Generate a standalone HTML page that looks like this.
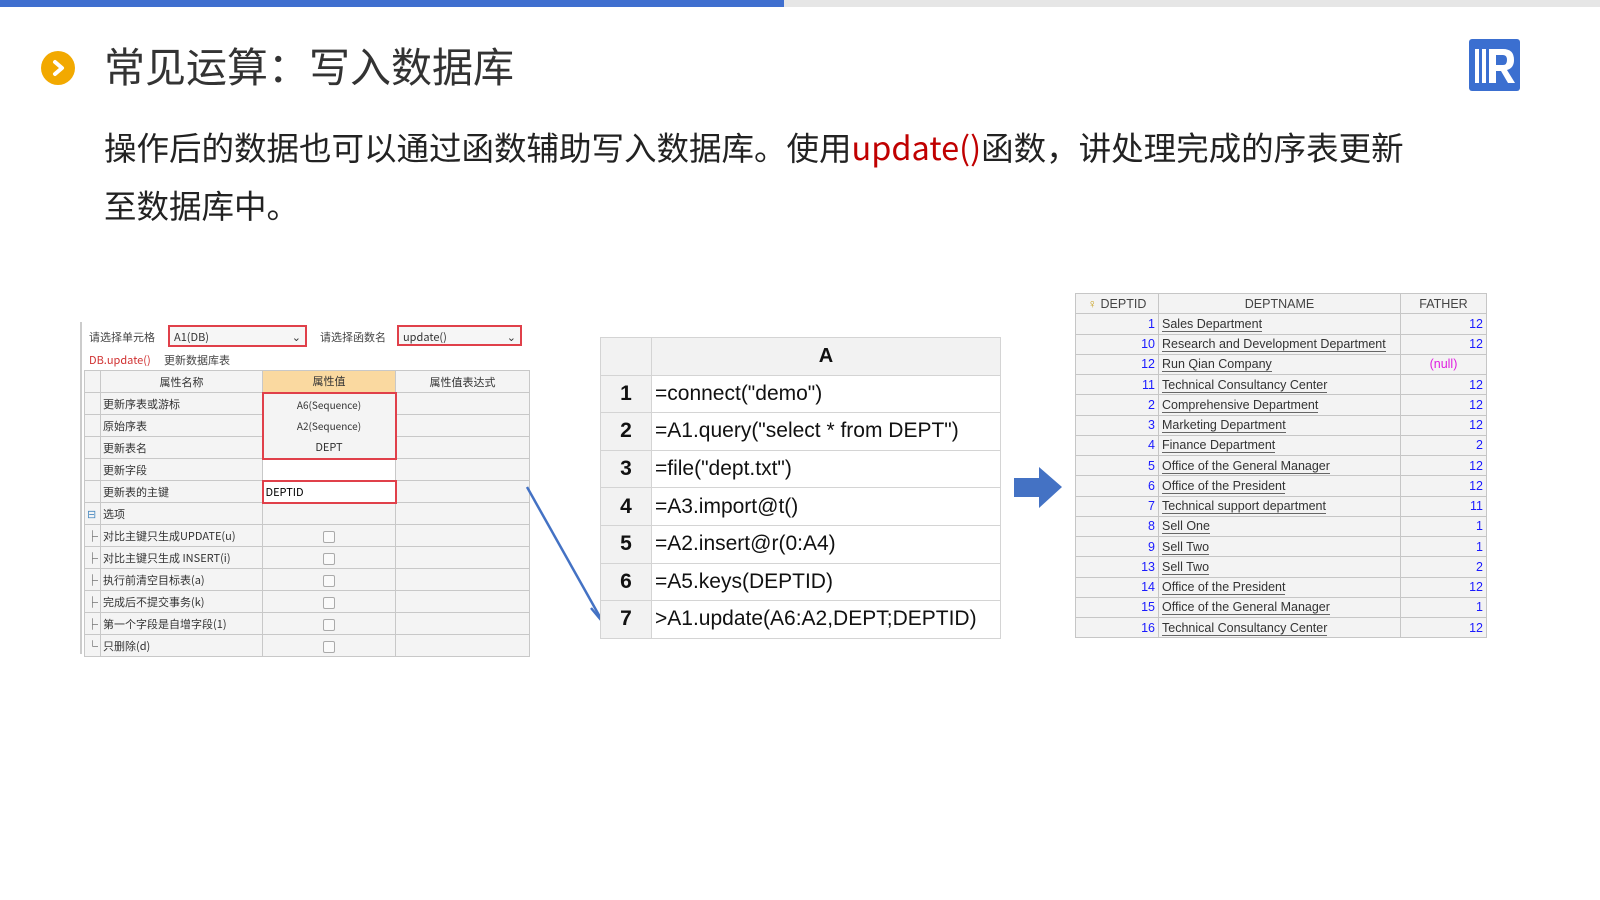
<!DOCTYPE html>
<html><head><meta charset="utf-8"><style>
*{margin:0;padding:0;box-sizing:border-box}
body{width:1600px;height:900px;background:#fff;position:relative;overflow:hidden;font-family:"Liberation Sans","Noto Sans CJK SC",sans-serif}
.abs{position:absolute}
.cjk{font-family:"Noto Sans CJK SC","Liberation Sans",sans-serif}
table{border-collapse:collapse}
#lt td{border:1px solid #c8c8c8;height:22px;font-size:11px;color:#333;padding:0 2px;white-space:nowrap}
#mt td{border:1px solid #d4d4d4;height:37.6px;font-size:21px;color:#111;padding:0 3px}
#rt td{border:1px solid #c6c6c6;height:20.25px;font-size:12.5px;padding:0 3px;background:#f3f3f3;white-space:nowrap}
#rt .n{color:#1a1aff;text-align:right}
#rt .t{color:#333}
#rt .t span{border-bottom:1px solid #666}
.cb{display:inline-block;width:12px;height:12px;border:1px solid #aaa;border-radius:2px;background:#fafafa;vertical-align:middle}
</style></head><body>
<div class="abs" style="left:0;top:0;width:784px;height:7px;background:#3f6fcf"></div>
<div class="abs" style="left:784px;top:0;width:816px;height:7px;background:#e6e6e6"></div>
<div class="abs" style="left:41px;top:51px;width:34px;height:34px;border-radius:50%;background:#f2a900"></div>
<svg class="abs" style="left:41px;top:51px" width="34" height="34"><path d="M14 11 L21 17 L14 23" stroke="#fff" stroke-width="4" fill="none" stroke-linecap="round" stroke-linejoin="round"/></svg>
<div class="abs cjk" style="left:104px;top:35px;font-size:41px;color:#333;line-height:58px">常见运算：写入数据库</div>
<svg class="abs" style="left:1469px;top:39px" width="51" height="52"><rect x="0" y="0" width="51" height="52" rx="3" fill="#3b6fd0"/><rect x="6" y="10" width="4" height="34" fill="#fff"/><rect x="13" y="10" width="4" height="34" fill="#fff"/><path d="M20 10 H34 Q45 10 45 21 Q45 29 38 31 L46 44 H39 L32 32 H27 V44 H20 Z M27 16 V26 H34 Q38 26 38 21 Q38 16 34 16 Z" fill="#fff"/></svg>
<div class="abs cjk" style="left:104px;top:118px;font-size:32.5px;color:#222;line-height:58px;width:1360px">操作后的数据也可以通过函数辅助写入数据库。使用<span style="color:#c00000">update()</span>函数，讲处理完成的序表更新<br>至数据库中。</div>

<!-- left panel -->
<div class="abs cjk" style="left:80px;top:322px;width:448px;height:332px;background:#fff;border-left:2px solid #ccc">
 <div class="abs" style="left:7px;top:7px;font-size:11px;color:#444">请选择单元格</div>
 <div class="abs" style="left:86px;top:3px;width:139px;height:22px;border:2px solid #e0404a;font-size:11px;color:#333;padding:2px 4px;background:#f6f6f6">A1(DB)<span style="position:absolute;right:4px">⌄</span></div>
 <div class="abs" style="left:238px;top:7px;font-size:11px;color:#444">请选择函数名</div>
 <div class="abs" style="left:315px;top:3px;width:125px;height:21px;border:2px solid #e0404a;font-size:11px;color:#333;padding:2px 4px;background:#f6f6f6">update()<span style="position:absolute;right:4px">⌄</span></div>
 <div class="abs" style="left:7px;top:30px;font-size:11px;color:#d03030">DB.update()</div>
 <div class="abs" style="left:82px;top:30px;font-size:11px;color:#444">更新数据库表</div>
 <table id="lt" class="abs" style="left:2px;top:48px;width:446px;background:#f4f4f4">
  <tr><td style="width:16px"></td><td style="width:162px;text-align:center">属性名称</td><td style="width:133px;text-align:center;background:#fad9a0">属性值</td><td style="text-align:center">属性值表达式</td></tr>
  <tr><td></td><td>更新序表或游标</td><td style="text-align:center;border-color:#e0404a;border-width:2px 2px 0 2px;font-size:10px">A6(Sequence)</td><td></td></tr>
  <tr><td></td><td>原始序表</td><td style="text-align:center;border-color:#e0404a;border-width:0 2px;font-size:10px">A2(Sequence)</td><td></td></tr>
  <tr><td></td><td>更新表名</td><td style="text-align:center;border-color:#e0404a;border-width:0 2px 2px 2px">DEPT</td><td></td></tr>
  <tr><td></td><td>更新字段</td><td style="background:#fff"></td><td></td></tr>
  <tr><td></td><td>更新表的主键</td><td style="background:#fff;border:2px solid #e0404a;color:#000">DEPTID</td><td></td></tr>
  <tr><td style="color:#4a8ac0">⊟</td><td>选项</td><td></td><td></td></tr>
  <tr><td>├</td><td>对比主键只生成UPDATE(u)</td><td style="text-align:center"><span class="cb"></span></td><td></td></tr>
  <tr><td>├</td><td>对比主键只生成 INSERT(i)</td><td style="text-align:center"><span class="cb"></span></td><td></td></tr>
  <tr><td>├</td><td>执行前清空目标表(a)</td><td style="text-align:center"><span class="cb"></span></td><td></td></tr>
  <tr><td>├</td><td>完成后不提交事务(k)</td><td style="text-align:center"><span class="cb"></span></td><td></td></tr>
  <tr><td>├</td><td>第一个字段是自增字段(1)</td><td style="text-align:center"><span class="cb"></span></td><td></td></tr>
  <tr><td>└</td><td>只删除(d)</td><td style="text-align:center"><span class="cb"></span></td><td></td></tr>
 </table>
</div>

<svg class="abs" style="left:520px;top:480px" width="90" height="150"><path d="M7 7 L80 137" stroke="#4472c4" stroke-width="2.5" fill="none"/><path d="M71 128 L81 140 L82 124" stroke="#4472c4" stroke-width="2.5" fill="none"/></svg>

<!-- middle -->
<table id="mt" class="abs" style="left:600px;top:337px;width:401px">
 <tr style="background:#f2f2f2"><td style="width:51px"></td><td style="text-align:center;font-weight:bold;font-size:20px">A</td></tr>
 <tr><td style="background:#f2f2f2;text-align:center;font-weight:bold">1</td><td>=connect("demo")</td></tr>
 <tr><td style="background:#f2f2f2;text-align:center;font-weight:bold">2</td><td>=A1.query("select * from DEPT")</td></tr>
 <tr><td style="background:#f2f2f2;text-align:center;font-weight:bold">3</td><td>=file("dept.txt")</td></tr>
 <tr><td style="background:#f2f2f2;text-align:center;font-weight:bold">4</td><td>=A3.import@t()</td></tr>
 <tr><td style="background:#f2f2f2;text-align:center;font-weight:bold">5</td><td>=A2.insert@r(0:A4)</td></tr>
 <tr><td style="background:#f2f2f2;text-align:center;font-weight:bold">6</td><td>=A5.keys(DEPTID)</td></tr>
 <tr><td style="background:#f2f2f2;text-align:center;font-weight:bold">7</td><td>&gt;A1.update(A6:A2,DEPT;DEPTID)</td></tr>
</table>

<svg class="abs" style="left:1013px;top:466px" width="50" height="44"><path d="M1 12 H26 V1 L49 21 L26 42 V31 H1 Z" fill="#4472c4"/></svg>

<!-- right -->
<table id="rt" class="abs" style="left:1075px;top:293px;width:412px">
 <tr><td style="width:83px;text-align:center;color:#444"><span style="color:#c8a020">♀</span> DEPTID</td><td style="width:242px;text-align:center;color:#444">DEPTNAME</td><td style="text-align:center;color:#444">FATHER</td></tr>
 <tr><td class="n">1</td><td class="t"><span>Sales Department</span></td><td class="n">12</td></tr>
 <tr><td class="n">10</td><td class="t"><span>Research and Development Department</span></td><td class="n">12</td></tr>
 <tr><td class="n">12</td><td class="t"><span>Run Qian Company</span></td><td style="text-align:center;color:#e020e0">(null)</td></tr>
 <tr><td class="n">11</td><td class="t"><span>Technical Consultancy Center</span></td><td class="n">12</td></tr>
 <tr><td class="n">2</td><td class="t"><span>Comprehensive Department</span></td><td class="n">12</td></tr>
 <tr><td class="n">3</td><td class="t"><span>Marketing Department</span></td><td class="n">12</td></tr>
 <tr><td class="n">4</td><td class="t"><span>Finance Department</span></td><td class="n">2</td></tr>
 <tr><td class="n">5</td><td class="t"><span>Office of the General Manager</span></td><td class="n">12</td></tr>
 <tr><td class="n">6</td><td class="t"><span>Office of the President</span></td><td class="n">12</td></tr>
 <tr><td class="n">7</td><td class="t"><span>Technical support department</span></td><td class="n">11</td></tr>
 <tr><td class="n">8</td><td class="t"><span>Sell One</span></td><td class="n">1</td></tr>
 <tr><td class="n">9</td><td class="t"><span>Sell Two</span></td><td class="n">1</td></tr>
 <tr><td class="n">13</td><td class="t"><span>Sell Two</span></td><td class="n">2</td></tr>
 <tr><td class="n">14</td><td class="t"><span>Office of the President</span></td><td class="n">12</td></tr>
 <tr><td class="n">15</td><td class="t"><span>Office of the General Manager</span></td><td class="n">1</td></tr>
 <tr><td class="n">16</td><td class="t"><span>Technical Consultancy Center</span></td><td class="n">12</td></tr>
</table>
</body></html>
